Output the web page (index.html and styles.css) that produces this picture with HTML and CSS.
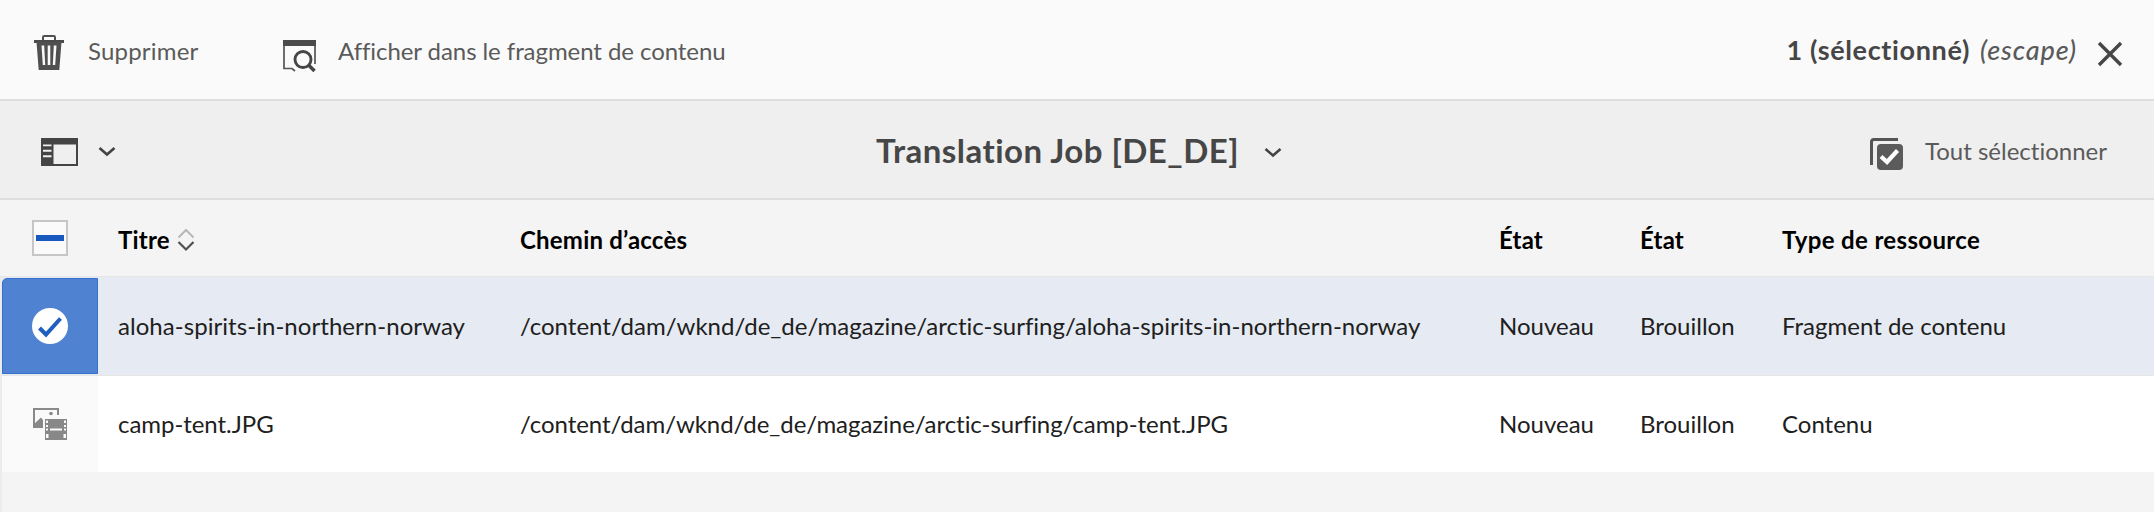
FILE: index.html
```html
<!DOCTYPE html>
<html lang="fr">
<head>
<meta charset="utf-8">
<title>Translation Job [DE_DE]</title>
<link rel="stylesheet" href="styles.css">
</head>
<body>
<header class="actionbar">
  <button class="action delete">
    <svg class="icon" width="30" height="36" viewBox="0 0 30 36"><path d="M9 6V2.2Q9 1 10.200 1H19.800Q21 1 21 2.200V6" fill="none" stroke="#505050" stroke-width="2"/><path d="M0 5h30v3H0z" fill="#4b4b4b"/><path fill-rule="evenodd" fill="#505050" d="M2.500 7H27.500L25.300 35H4.700ZM7.500 10.500L8.800 30H11.200L10.200 10.500ZM13.700 10.500V30H16.300V10.500ZM19.800 10.500L18.800 30H21.200L22.500 10.500Z"/></svg>
    <span class="label">Supprimer</span>
  </button>
  <button class="action view">
    <svg class="icon" width="34" height="34" viewBox="0 0 34 34"><path d="M1 5V28.500H9L12 31M32 5V24" fill="none" stroke="#555" stroke-width="1.700"/><path d="M0 0h33v6H0z" fill="#4b4b4b"/><circle cx="20" cy="19.500" r="8" fill="none" stroke="#464646" stroke-width="2.900"/><path d="M25.500 25L31.500 31" stroke="#464646" stroke-width="3.600"/></svg>
    <span class="label">Afficher dans le fragment de contenu</span>
  </button>
  <div class="selection">
    <strong class="count">1 (sélectionné)</strong>
    <em class="escape">(escape)</em>
    <svg class="close" width="26" height="26" viewBox="0 0 26 26"><path d="M2 2L24 24M24 2L2 24" stroke="#464646" stroke-width="3.400"/></svg>
  </div>
</header>
<nav class="titlebar">
  <div class="rail">
    <svg width="37" height="28" viewBox="0 0 37 28"><path d="M0 0h37v28H0zM12.500 6.500V26H35V6.500ZM2 6.500V8.300H10.500V6.500ZM2 11.700V13.700H10.500V11.700ZM2 17.200V19.200H10.500V17.200Z" fill="#444" fill-rule="evenodd"/></svg>
    <svg class="chevron" width="18" height="12" viewBox="0 0 18 12"><path d="M1.500 2L9 8.500L16.500 2" fill="none" stroke="#444" stroke-width="2.700"/></svg>
  </div>
  <div class="heading">
    <h1>Translation Job [DE_DE]</h1>
    <svg class="chevron" width="18" height="12" viewBox="0 0 18 12"><path d="M1.500 2L9 8.500L16.500 2" fill="none" stroke="#444" stroke-width="2.500"/></svg>
  </div>
  <button class="selectall">
    <svg width="33" height="32" viewBox="0 0 33 32"><path d="M1.500 27V4Q1.500 1.500 4 1.500H28" fill="none" stroke="#555" stroke-width="3"/><rect x="7" y="6" width="26" height="26" rx="4" fill="#5b5b5b"/><path d="M11 18.500L17 24L27.500 12.500" fill="none" stroke="#fff" stroke-width="4.200"/></svg>
    <span class="label">Tout sélectionner</span>
  </button>
</nav>
<main class="table">
  <div class="row head">
    <div class="thumb"><span class="checkbox"></span></div>
    <div class="cell">Titre
      <svg class="sort" width="18" height="24" viewBox="0 0 18 24"><path d="M1.500 9.500L9 2L16.500 9.500" fill="none" stroke="#b8b8b8" stroke-width="2"/><path d="M1.500 14L9 21.500L16.500 14" fill="none" stroke="#505050" stroke-width="2.200"/></svg></div>
    <div class="cell">Chemin d’accès</div>
    <div class="cell">État</div>
    <div class="cell">État</div>
    <div class="cell type">Type de ressource</div>
  </div>
  <div class="row selected">
    <div class="thumb"><svg width="36" height="36" viewBox="0 0 36 36"><circle cx="18" cy="18" r="18" fill="#fff"/><path d="M7.500 20L14 26.500L28.500 10.500" fill="none" stroke="#1f5fc0" stroke-width="4"/></svg></div>
    <div class="cell name">aloha-spirits-in-northern-norway</div>
    <div class="cell">/content/dam/wknd/de_de/magazine/arctic-surfing/aloha-spirits-in-northern-norway</div>
    <div class="cell">Nouveau</div>
    <div class="cell">Brouillon</div>
    <div class="cell">Fragment de contenu</div>
  </div>
  <div class="row">
    <div class="thumb"><svg width="34" height="32" viewBox="0 0 34 32"><path d="M1 18V1H25V7" fill="none" stroke="#8a8a8a" stroke-width="2"/><circle cx="18" cy="5.500" r="1.800" fill="#888"/><path d="M0 20V17L8 9.500L10 12V20Z" fill="#888"/><path fill-rule="evenodd" fill="#888" d="M12 11H34V32H12ZM13 12.500V15H15V12.500ZM31 12.500V15H33V12.500ZM13 17V19H15V17ZM31 17V19H33V17ZM17 20.500V22.500H29V20.500ZM13 20.500V22.500H15V20.500ZM31 20.500V22.500H33V20.500ZM13 26V30H15.500V26ZM30.500 26V30H33V26Z"/></svg></div>
    <div class="cell short">camp-tent.JPG</div>
    <div class="cell short">/content/dam/wknd/de_de/magazine/arctic-surfing/camp-tent.JPG</div>
    <div class="cell">Nouveau</div>
    <div class="cell">Brouillon</div>
    <div class="cell">Contenu</div>
  </div>
</main>
</body>
</html>
```
FILE: styles.css
```css
* { box-sizing: border-box; }
body { margin: 0; height: 512px; overflow: hidden; background: #f4f4f4; font: 24px/32px Lato, "Open Sans", sans-serif; font-variant-ligatures: none; color: #202020; }
button { padding: 0; border: 0; background: none; font: inherit; font-variant-ligatures: none; color: #5a5a5a; }
svg { display: block; flex: none; }
.actionbar { height: 101px; display: flex; align-items: flex-start; padding: 34px 31px 0 34px; background: #fafafa; border-bottom: 2px solid #dedede; }
.action { display: flex; align-items: flex-start; white-space: nowrap; }
.action .label { margin-top: 1px; }
.delete { width: 249px; gap: 24px; letter-spacing: 0.2px; }
.view { gap: 21px; letter-spacing: -0.07px; }
.view .icon { margin-top: 6px; }
.delete .icon { margin-top: 1px; }
.selection { display: flex; margin-left: auto; font-size: 27px; color: #464646; white-space: nowrap; }
.count { letter-spacing: 0.65px; }
.escape { margin-left: 10px; letter-spacing: 0.9px; font-weight: 500; color: #5a5a5a; }
.close { margin: 7px 0 0 20px; }
.titlebar { height: 99px; display: grid; grid-template-columns: 1fr auto 1fr; padding: 34px 47px 0 41px; background: #efefef; border-bottom: 2px solid #dedede; }
.rail { display: flex; gap: 20px; padding-top: 3px; }
.rail .chevron { margin-top: 8px; }
.heading { display: flex; gap: 25px; margin-left: 10px; }
.heading .chevron { margin-top: 12px; }
h1 { margin: -1px 0 0; font-size: 33px; line-height: 32px; letter-spacing: 0.48px; color: #464646; }
.selectall { display: flex; justify-self: end; gap: 22px; }
.selectall svg { margin-top: 3px; }
.table { height: 312px; border-left: 2px solid #ececec; }
.row { display: grid; grid-template-columns: 96px 402px 979px 141px 142px 1fr; height: 96px; background: #fff; }
.head { height: 77px; margin-left: -2px; padding-left: 2px; background: #f4f4f4; font-weight: 700; color: #000; border-bottom: 1px solid #e6e6e6; }
.selected { height: 99px; background: #e6eaf2; border-bottom: 1px solid #e6e6e6; }
.thumb { display: flex; align-items: center; justify-content: center; background: #fafafa; }
.head .thumb { background: none; }
.selected .thumb { margin: 1px 0; background: #4f82d0; border: 1px solid #3570cc; border-radius: 5px 0 0 0; }
.cell { display: flex; align-items: center; padding-left: 20px; gap: 7px; white-space: nowrap; }
.name { letter-spacing: 0.05px; }
.short { letter-spacing: -0.05px; }
.head .cell { padding-top: 3px; letter-spacing: 0.2px; }
.head .type { letter-spacing: 0.35px; }
.checkbox { width: 36px; height: 36px; border: 2px solid #c6c6c6; background: #fafafa; display: flex; align-items: center; justify-content: center; }
.checkbox::after { content: ""; width: 28px; height: 6px; background: #1859bd; }
```
